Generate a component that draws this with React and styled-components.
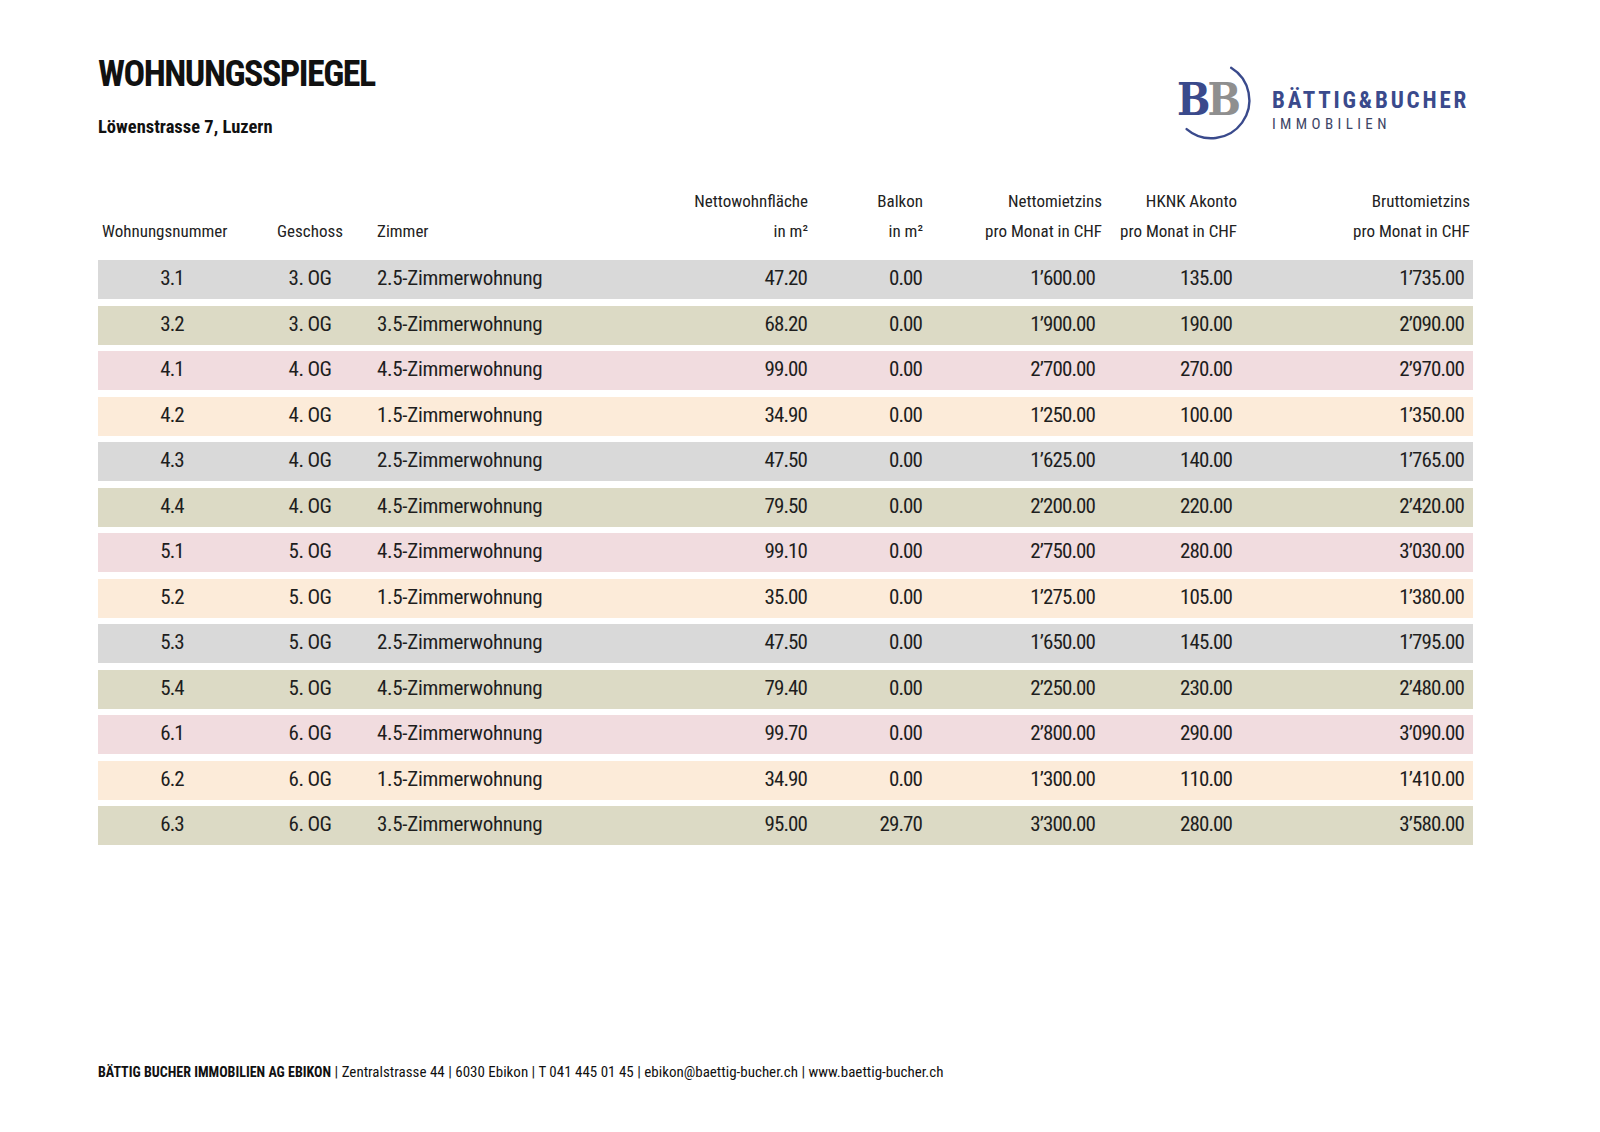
import React from "react";
import styled, { createGlobalStyle } from "styled-components";

const colors = {
  text: "#1c1c1c",
  navy: "#3a4a8c",
  navyDark: "#3d4566",
  greyB: "#8f8f8f",
  grey: "#d9d9d9",
  olive: "#dcdac5",
  pink: "#f1dcdf",
  peach: "#fcebd9",
};

const narrow =
  '"Roboto Condensed", "Open Sans", "DejaVu Sans Condensed", sans-serif';

const GlobalStyle = createGlobalStyle`
  html, body {
    margin: 0;
    padding: 0;
    background: #ffffff;
  }
  body {
    font-family: ${narrow};
    font-stretch: 75%;
    color: ${colors.text};
  }
`;

const columns = [
  { key: "nr", title: ["", "Wohnungsnummer"], width: 148, align: "center", headAlign: "left", headPad: "0 0 0 4px", cellPad: "0", spacing: -0.9 },
  { key: "og", title: ["", "Geschoss"], width: 128, align: "center", headAlign: "center", headPad: "0", cellPad: "0", spacing: -0.6 },
  { key: "zi", title: ["", "Zimmer"], width: 260, align: "left", headAlign: "left", headPad: "0 0 0 3px", cellPad: "0 0 0 3px", spacing: -0.3 },
  { key: "nwf", title: ["Nettowohnfläche", "in m²"], width: 178, align: "right", headAlign: "right", headPad: "0 4px 0 0", cellPad: "0 5px 0 0", spacing: -0.9 },
  { key: "bal", title: ["Balkon", "in m²"], width: 115, align: "right", headAlign: "right", headPad: "0 4px 0 0", cellPad: "0 5px 0 0", spacing: -0.9 },
  { key: "nmz", title: ["Nettomietzins", "pro Monat in CHF"], width: 175, align: "right", headAlign: "right", headPad: "0", cellPad: "0 7px 0 0", spacing: -0.9 },
  { key: "hk", title: ["HKNK Akonto", "pro Monat in CHF"], width: 135, align: "right", headAlign: "right", headPad: "0", cellPad: "0 5px 0 0", spacing: -0.9 },
  { key: "bmz", title: ["Bruttomietzins", "pro Monat in CHF"], width: 236, align: "right", headAlign: "right", headPad: "0 3px 0 0", cellPad: "0 9px 0 0", spacing: -0.9 },
];

const rows = [
  ["3.1", "3. OG", "2.5-Zimmerwohnung", "47.20", "0.00", "1’600.00", "135.00", "1’735.00", "grey"],
  ["3.2", "3. OG", "3.5-Zimmerwohnung", "68.20", "0.00", "1’900.00", "190.00", "2’090.00", "olive"],
  ["4.1", "4. OG", "4.5-Zimmerwohnung", "99.00", "0.00", "2’700.00", "270.00", "2’970.00", "pink"],
  ["4.2", "4. OG", "1.5-Zimmerwohnung", "34.90", "0.00", "1’250.00", "100.00", "1’350.00", "peach"],
  ["4.3", "4. OG", "2.5-Zimmerwohnung", "47.50", "0.00", "1’625.00", "140.00", "1’765.00", "grey"],
  ["4.4", "4. OG", "4.5-Zimmerwohnung", "79.50", "0.00", "2’200.00", "220.00", "2’420.00", "olive"],
  ["5.1", "5. OG", "4.5-Zimmerwohnung", "99.10", "0.00", "2’750.00", "280.00", "3’030.00", "pink"],
  ["5.2", "5. OG", "1.5-Zimmerwohnung", "35.00", "0.00", "1’275.00", "105.00", "1’380.00", "peach"],
  ["5.3", "5. OG", "2.5-Zimmerwohnung", "47.50", "0.00", "1’650.00", "145.00", "1’795.00", "grey"],
  ["5.4", "5. OG", "4.5-Zimmerwohnung", "79.40", "0.00", "2’250.00", "230.00", "2’480.00", "olive"],
  ["6.1", "6. OG", "4.5-Zimmerwohnung", "99.70", "0.00", "2’800.00", "290.00", "3’090.00", "pink"],
  ["6.2", "6. OG", "1.5-Zimmerwohnung", "34.90", "0.00", "1’300.00", "110.00", "1’410.00", "peach"],
  ["6.3", "6. OG", "3.5-Zimmerwohnung", "95.00", "29.70", "3’300.00", "280.00", "3’580.00", "olive"],
];

const gridTemplate = columns.map((c) => `${c.width}px`).join(" ");

// BB mark with the open ring around it
const BBLogo = () => (
  <svg width="80" height="82" viewBox="0 0 80 82">
    <path
      d="M57.1 7.8 A38 38 0 1 1 12.6 69.1"
      fill="none"
      stroke={colors.navy}
      strokeWidth="2.4"
      strokeLinecap="round"
    />
    <text
      x="3"
      y="55"
      fontFamily='"DejaVu Serif", serif'
      fontWeight="bold"
      fontSize="44"
    >
      <tspan fill={colors.navy}>B</tspan>
      <tspan fill={colors.greyB} dx="-3">
        B
      </tspan>
    </text>
  </svg>
);

const App = () => {
  return (
    <Page>
      <GlobalStyle />
      <Header>
        <TitleBlock>
          <Title>WOHNUNGSSPIEGEL</Title>
          <Address>Löwenstrasse 7, Luzern</Address>
        </TitleBlock>
        <Logo>
          <BBLogo />
          <Brand>
            <BrandName>BÄTTIG&amp;BUCHER</BrandName>
            <BrandSub>IMMOBILIEN</BrandSub>
          </Brand>
        </Logo>
      </Header>

      <Table>
        <HeadRow>
          {columns.map((c) => (
            <HeadCell key={c.key} align={c.headAlign} pad={c.headPad}>
              <span>{c.title[0] || "\u00a0"}</span>
              <span>{c.title[1]}</span>
            </HeadCell>
          ))}
        </HeadRow>
        <Body>
          {rows.map((r) => (
            <Row key={r[0]} bg={colors[r[8]]}>
              {columns.map((c, i) => (
                <Cell
                  key={c.key}
                  align={c.align}
                  pad={c.cellPad}
                  spacing={c.spacing}
                >
                  {r[i]}
                </Cell>
              ))}
            </Row>
          ))}
        </Body>
      </Table>

      <Footer>
        <strong>BÄTTIG BUCHER IMMOBILIEN AG EBIKON</strong> | Zentralstrasse 44 |
        6030 Ebikon | T 041 445 01 45 | ebikon@baettig-bucher.ch |
        www.baettig-bucher.ch
      </Footer>
    </Page>
  );
};

export default App;

const Page = styled.div`
  min-height: 100vh;
  box-sizing: border-box;
  padding: 56px 127px 52px 98px;
  display: flex;
  flex-direction: column;
`;

const Header = styled.div`
  display: flex;
  justify-content: space-between;
  align-items: flex-start;
`;

const TitleBlock = styled.div`
  display: flex;
  flex-direction: column;
  gap: 26px;
`;

const Title = styled.h1`
  margin: 0;
  font-size: 36px;
  line-height: 1;
  font-weight: 700;
  letter-spacing: -1.5px;
  color: #111;
`;

const Address = styled.div`
  font-size: 18.5px;
  line-height: 1;
  font-weight: 700;
  color: #111;
`;

const Logo = styled.div`
  display: flex;
  align-items: flex-start;
  gap: 18px;
  margin-top: 4px;
  margin-right: 4px;
`;

const Brand = styled.div`
  display: flex;
  flex-direction: column;
  gap: 5px;
  margin-top: 29px;
`;

const BrandName = styled.div`
  font-size: 23px;
  line-height: 1;
  font-weight: 700;
  letter-spacing: 2.8px;
  color: ${colors.navy};
`;

const BrandSub = styled.div`
  font-size: 15px;
  line-height: 1;
  letter-spacing: 4.4px;
  color: ${colors.navyDark};
`;

const Table = styled.div`
  margin-top: 44px;
  display: flex;
  flex-direction: column;
  gap: 14px;
`;

const HeadRow = styled.div`
  display: grid;
  grid-template-columns: ${gridTemplate};
`;

const HeadCell = styled.div`
  display: flex;
  flex-direction: column;
  align-items: ${(p) =>
    p.align === "right" ? "flex-end" : p.align === "center" ? "center" : "flex-start"};
  padding: ${(p) => p.pad};
  font-size: 17px;
  line-height: 30px;
  color: #222;
  white-space: nowrap;
`;

const Body = styled.div`
  display: flex;
  flex-direction: column;
  gap: 6.5px;
`;

const Row = styled.div`
  display: grid;
  grid-template-columns: ${gridTemplate};
  height: 39px;
  align-items: center;
  background: ${(p) => p.bg};
`;

const Cell = styled.div`
  text-align: ${(p) => p.align};
  padding: ${(p) => p.pad};
  font-size: 21px;
  line-height: 1;
  letter-spacing: ${(p) => p.spacing}px;
  padding-bottom: 2px;
  color: #1e1e1e;
  white-space: nowrap;
`;

const Footer = styled.div`
  margin-top: auto;
  font-size: 15px;
  line-height: 1;
  color: #111;
  white-space: nowrap;

  strong {
    font-size: 14px;
    font-weight: 700;
  }
`;
